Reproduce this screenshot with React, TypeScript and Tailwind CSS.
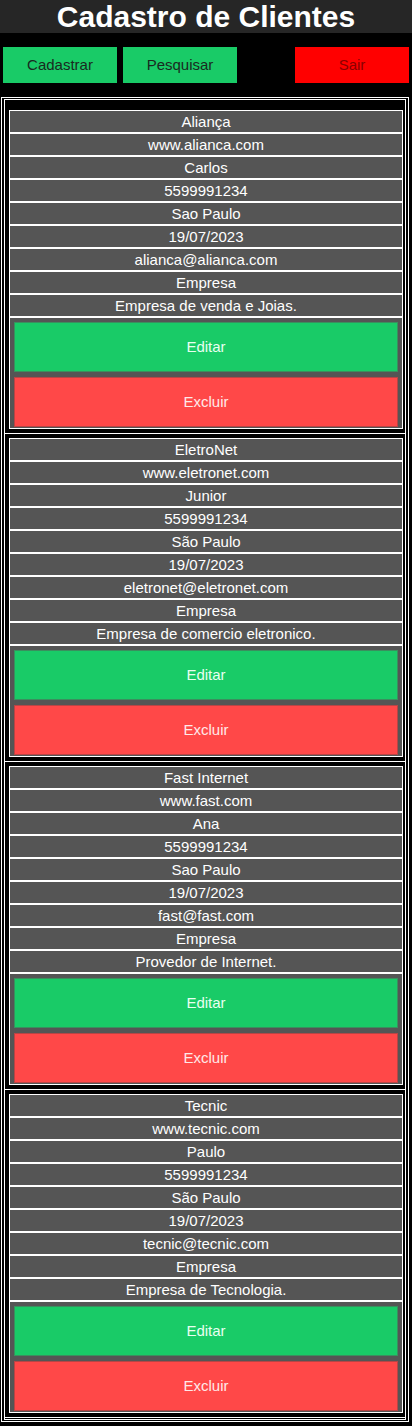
import React from 'react'

type Cliente = {
  nome: string
  site: string
  contato: string
  telefone: string
  cidade: string
  data: string
  email: string
  tipo: string
  descricao: string
}

const CLIENTES: Cliente[] = [
  { nome: 'Aliança', site: 'www.alianca.com', contato: 'Carlos', telefone: '5599991234', cidade: 'Sao Paulo', data: '19/07/2023', email: 'alianca@alianca.com', tipo: 'Empresa', descricao: 'Empresa de venda e Joias.' },
  { nome: 'EletroNet', site: 'www.eletronet.com', contato: 'Junior', telefone: '5599991234', cidade: 'São Paulo', data: '19/07/2023', email: 'eletronet@eletronet.com', tipo: 'Empresa', descricao: 'Empresa de comercio eletronico.' },
  { nome: 'Fast Internet', site: 'www.fast.com', contato: 'Ana', telefone: '5599991234', cidade: 'Sao Paulo', data: '19/07/2023', email: 'fast@fast.com', tipo: 'Empresa', descricao: 'Provedor de Internet.' },
  { nome: 'Tecnic', site: 'www.tecnic.com', contato: 'Paulo', telefone: '5599991234', cidade: 'São Paulo', data: '19/07/2023', email: 'tecnic@tecnic.com', tipo: 'Empresa', descricao: 'Empresa de Tecnologia.' },
]

function Campo({ children }: { children: React.ReactNode }) {
  return (
    <div className="h-[23px] border border-white bg-[#555555] text-center text-[15px] leading-[21px] text-white">
      {children}
    </div>
  )
}

function Card({ c, first }: { c: Cliente; first: boolean }) {
  const campos = [c.nome, c.site, c.contato, c.telefone, c.cidade, c.data, c.email, c.tipo, c.descricao]
  return (
    <div className={first ? 'border-b border-white pt-[10px] pb-[4px] pl-[4px] pr-[2px]' : 'border-b border-white pt-[4px] pb-[4px] pl-[4px] pr-[2px]'}>
      {campos.map((v, i) => <Campo key={i}>{v}</Campo>)}
      <div className="flex flex-col gap-[5px] border border-white bg-[#555555] px-[4px] pt-[4px] pb-[1px]">
        <button className="h-[50px] border border-[#3a8f5e] bg-[#19cb67] text-[15px] text-[#e8fff0]">Editar</button>
        <button className="h-[50px] border border-[#b84545] bg-[#ff4848] text-[15px] text-[#ffe8e8]">Excluir</button>
      </div>
    </div>
  )
}

export default function App() {
  return (
    <div className="min-h-[1426px] bg-black font-['Liberation_Sans',Arial,sans-serif]">
      <header className="h-[33px] bg-[#262626] text-center text-[30px] font-bold leading-[33px] text-white">
        Cadastro de Clientes
      </header>

      <nav className="flex items-center px-[3px] pt-[14px] pb-[14px]">
        <button className="h-[36px] w-[114px] bg-[#19cb67] text-[15px] text-[#1a2a1f]">Cadastrar</button>
        <button className="ml-[6px] h-[36px] w-[114px] bg-[#19cb67] text-[15px] text-[#1a2a1f]">Pesquisar</button>
        <button className="ml-auto h-[36px] w-[114px] bg-[#ff0000] text-[15px] text-[#8a0000]">Sair</button>
      </nav>

      <main className="ml-[1px] mr-[3px] border border-white px-[2px] pt-[1px] pb-[1px]">
        <div className="border border-white pb-[1px]">
          {CLIENTES.map((c, i) => <Card key={c.nome} c={c} first={i === 0} />)}
        </div>
      </main>
    </div>
  )
}
